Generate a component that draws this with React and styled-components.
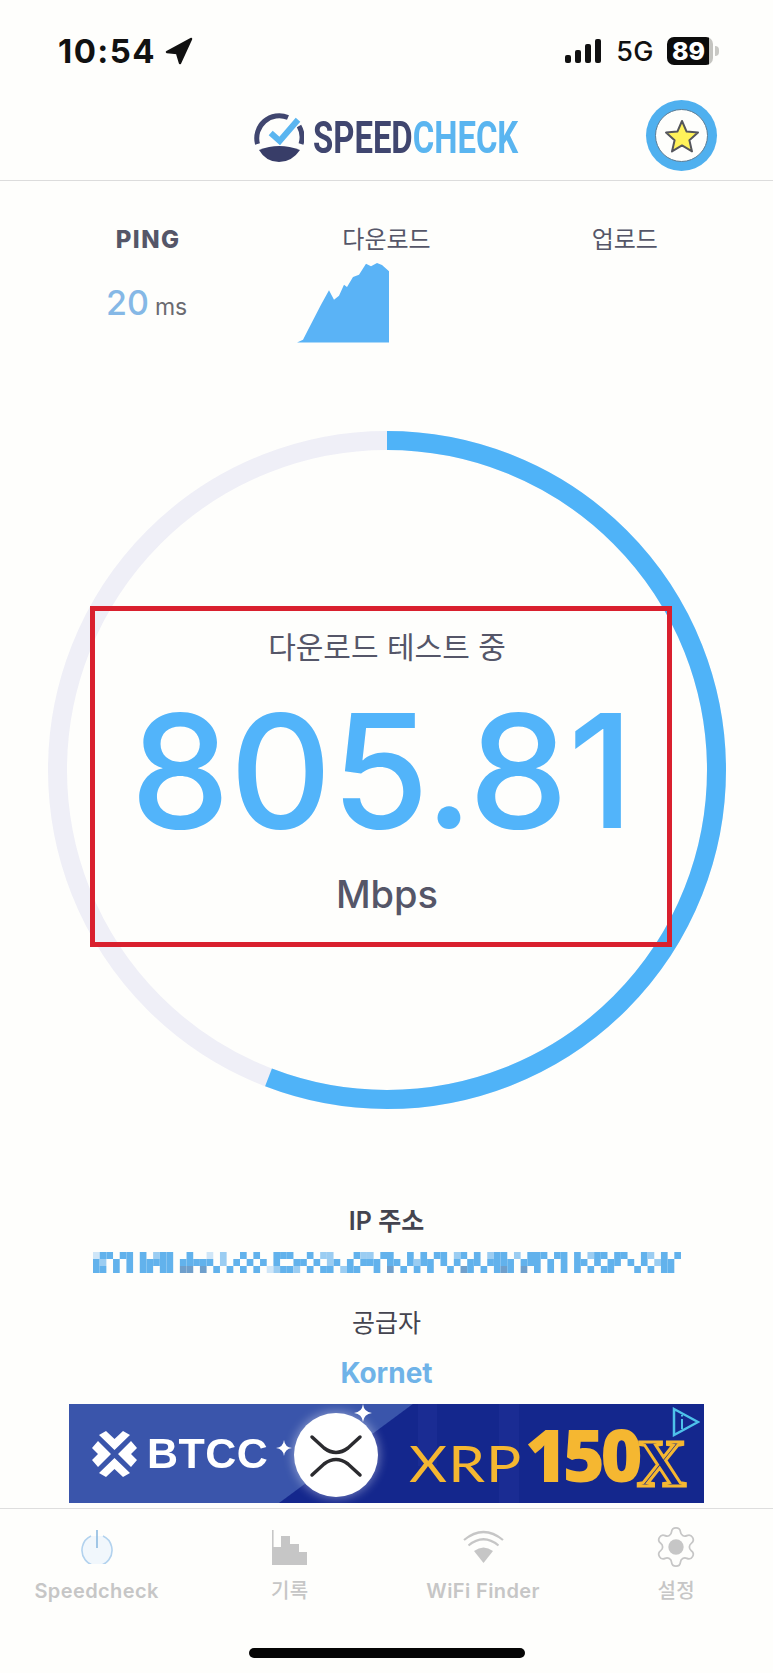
import React from "react";
import styled, { createGlobalStyle } from "styled-components";
import { Settings } from "lucide-react";

const KR = `Inter, "Noto Sans CJK KR", sans-serif`;

const GlobalStyle = createGlobalStyle`
  html, body {
    margin: 0;
    padding: 0;
    background: #fefefc;
  }
  * {
    box-sizing: border-box;
  }
`;

const Page = styled.div`
  width: 773px;
  height: 1673px;
  overflow: hidden;
  background: #fefefc;
  font-family: ${KR};
  display: flex;
  flex-direction: column;
`;

/* status bar */
const StatusBar = styled.div`
  height: 90px;
  padding: 35px 60px 0 58px;
  display: flex;
  justify-content: space-between;
  align-items: flex-start;
`;

const StatusGroup = styled.div`
  display: flex;
  align-items: center;
  height: 32px;
  color: #111;
`;

const Clock = styled.span`
  font-size: 33px;
  font-weight: 700;
  letter-spacing: 1.4px;
  margin-right: 9px;
`;

const Bars = styled.div`
  display: flex;
  align-items: flex-end;
  gap: 4px;
  height: 24px;
  margin-right: 15px;
`;

const Bar = styled.i`
  display: block;
  width: 6px;
  height: ${(p) => p.$h}px;
  background: #111;
  border-radius: 2px;
`;

const Network = styled.span`
  font-size: 27px;
  font-weight: 500;
  letter-spacing: 0.5px;
  margin-right: 13px;
`;

const Battery = styled.div`
  width: 46px;
  height: 28px;
  border-radius: 7px;
  background: linear-gradient(90deg, #0c0c0c 92%, #c4c4c0 92%);
  color: #fff;
  font-size: 25px;
  font-weight: 800;
  display: flex;
  align-items: center;
  justify-content: center;
  padding-right: 3px;
  position: relative;
  &::after {
    content: "";
    position: absolute;
    right: -6px;
    top: 9px;
    width: 4px;
    height: 10px;
    border-radius: 0 4px 4px 0;
    background: #c9c9c5;
  }
`;

/* header */
const Header = styled.header`
  height: 91px;
  border-bottom: 1.5px solid #dcdcdc;
  display: grid;
  grid-template-columns: 1fr auto 1fr;
  align-items: center;
  padding: 0 56px;
`;

const Logo = styled.div`
  grid-column: 2;
  display: flex;
  align-items: center;
  gap: 9px;
  margin-top: 5px;
`;

const Wordmark = styled.div`
  width: 206px;
  height: 40px;
  font-family: Roboto, sans-serif;
  font-size: 45px;
  line-height: 40px;
  font-weight: 700;
  white-space: nowrap;
  color: #40466f;
  transform: scaleX(0.73);
  transform-origin: left center;
`;

const WordAccent = styled.span`
  color: #5ab5f0;
`;

const FavButton = styled.div`
  grid-column: 3;
  justify-self: end;
  width: 71px;
  height: 71px;
  margin-top: 1px;
  border-radius: 50%;
  background: #4fb0ef;
  display: flex;
  align-items: center;
  justify-content: center;
`;

const FavInner = styled.div`
  width: 53px;
  height: 53px;
  border-radius: 50%;
  background: #fefefc;
  border: 1.5px solid #5c7c94;
  display: flex;
  align-items: center;
  justify-content: center;
`;

/* ping / download / upload */
const Stats = styled.section`
  height: 250px;
  padding: 44px 29px 0;
  display: grid;
  grid-template-columns: repeat(3, 1fr);
  align-content: start;
`;

const StatColumn = styled.div`
  display: flex;
  flex-direction: column;
  align-items: center;
`;

const StatTitle = styled.div`
  height: 30px;
  line-height: 30px;
  font-size: 24px;
  font-weight: ${(p) => (p.$latin ? 800 : 400)};
  letter-spacing: ${(p) => (p.$latin ? 1.5 : 0)}px;
  color: #555668;
`;

const PingValue = styled.div`
  margin-top: 28px;
  height: 40px;
  line-height: 40px;
  margin-right: 3px;
  font-size: 34px;
  font-weight: 500;
  color: #85b8e6;
`;

const PingUnit = styled.span`
  font-size: 23px;
  font-weight: 400;
  color: #6a6a70;
  margin-left: 6px;
`;

const Sparkline = styled.svg`
  display: block;
  margin-top: 8px;
  margin-right: 87px;
`;

/* gauge */
const Gauge = styled.section`
  width: 678px;
  height: 678px;
  margin-left: 48px;
  display: grid;
`;

const GaugeRing = styled.svg`
  grid-area: 1 / 1;
  display: block;
`;

const Readout = styled.div`
  grid-area: 1 / 1;
  width: 582px;
  height: 341px;
  margin: 175px 0 0 42px;
  padding-left: 12px;
  border: 5px solid #d9202e;
  display: flex;
  flex-direction: column;
  align-items: center;
  z-index: 1;
`;

const ReadoutTitle = styled.div`
  margin-top: 18px;
  height: 36px;
  line-height: 36px;
  font-size: 30px;
  color: #555668;
`;

const Speed = styled.div`
  margin: 31px 0 0 -10px;
  height: 150px;
  line-height: 150px;
  font-size: 158px;
  font-weight: 500;
  letter-spacing: -0.2px;
  color: #52b4fa;
`;

const SpeedUnit = styled.div`
  margin-top: 26px;
  height: 44px;
  line-height: 44px;
  font-size: 38px;
  font-weight: 500;
  color: #555668;
`;

/* ip + provider */
const Info = styled.section`
  padding-top: 97px;
  display: flex;
  flex-direction: column;
  align-items: center;
`;

const InfoLabel = styled.div`
  height: 30px;
  line-height: 30px;
  margin-top: ${(p) => p.$top || 0}px;
  font-size: 25px;
  font-weight: ${(p) => p.$weight || 400};
  color: #44444f;
`;

const Mosaic = styled.svg`
  display: block;
  margin-top: 16px;
  filter: blur(0.4px);
`;

const Provider = styled.div`
  height: 30px;
  line-height: 30px;
  margin-top: 20px;
  font-size: 28px;
  font-weight: 700;
  color: #6fb3e8;
`;

/* ad */
const Ad = styled.div`
  position: relative;
  width: 635px;
  height: 99px;
  margin: 16px 0 0 69px;
  padding-left: 23px;
  display: flex;
  align-items: center;
  filter: blur(0.5px);
  background:
    linear-gradient(#1a2c93, #1a2c93) 349px 0 / 19px 62px no-repeat,
    linear-gradient(#1a2c93, #1a2c93) 430px 0 / 20px 99px no-repeat,
    linear-gradient(143.5deg, #3a55ab 204px, #14278d 205px);
`;

const BtccText = styled.span`
  margin-left: 10px;
  font-family: "Liberation Sans", sans-serif;
  font-size: 43px;
  font-weight: 700;
  color: #fff;
  letter-spacing: 0.5px;
`;

const Coin = styled.div`
  position: absolute;
  left: 225px;
  top: 9px;
  width: 84px;
  height: 84px;
  border-radius: 50%;
  background: #fff;
  box-shadow: 0 0 10px 2px rgba(255, 255, 255, 0.35);
`;

const Spark = styled.svg`
  position: absolute;
  left: ${(p) => p.$x}px;
  top: ${(p) => p.$y}px;
`;

const XrpText = styled.span`
  position: absolute;
  left: 340px;
  top: 29px;
  font-family: Lato, sans-serif;
  font-size: 51px;
  line-height: 60px;
  font-weight: 400;
  letter-spacing: 1px;
  color: #f5b731;
  transform: scaleX(1.15);
  transform-origin: left;
`;

const Multiplier = styled.span`
  position: absolute;
  left: 456px;
  top: 14px;
  font-family: "Open Sans", sans-serif;
  font-size: 72px;
  line-height: 72px;
  font-weight: 800;
  letter-spacing: -4.5px;
  color: #f5b731;
`;

const MultiplierX = styled.span`
  position: absolute;
  left: 568px;
  top: 29px;
  font-family: "Liberation Serif", serif;
  font-size: 68px;
  line-height: 60px;
  font-weight: 700;
  color: #14278d;
  -webkit-text-stroke: 3px #f5b731;
`;

const AdChoices = styled.svg`
  position: absolute;
  right: 4px;
  top: 3px;
`;

/* bottom nav */
const Nav = styled.nav`
  margin-top: 5px;
  border-top: 1.5px solid #dedede;
  padding-top: 18px;
  display: grid;
  grid-template-columns: repeat(4, 1fr);
`;

const NavItem = styled.div`
  display: flex;
  flex-direction: column;
  align-items: center;
`;

const NavIcon = styled.div`
  height: 40px;
  display: flex;
  align-items: center;
  justify-content: center;
  color: #c6c6c6;
  circle {
    r: 4px;
    fill: #c6c6c6;
    stroke: none;
  }
`;

const NavLabel = styled.div`
  margin-top: 11px;
  height: 26px;
  line-height: 26px;
  font-size: 20px;
  font-weight: ${(p) => (p.$kr ? 500 : 600)};
  letter-spacing: 0.4px;
  color: #c6c6c6;
`;

const HomeBar = styled.div`
  width: 276px;
  height: 10px;
  margin: 44px auto 0;
  border-radius: 5px;
  background: #050505;
`;

const CHART =
  "M0 79.5 L6 76.7 L12 65 L24 41.7 L32 27.3 L37 36.7 L42 32.7 L47 21.7 L50 24 L56 14 L62 11.7 L69 .7 L74 3.3 L80 0 L85 2 L92 8.3 L92 79.5Z";

// blurred-out address, one string per row of blocks
const MOSAIC = [
  "133.33.3.233..3..1.2..3.3..333..3.22...322.33..3.3.33.23.3.233.2.333.33.3.233.33..32.3.3",
  "32.3.3.33333.33333.2.3.3.3.3..33.3.23.3.333.33.3233.3.3.33.3333.333.3.3.33.3.33.3.3.233",
  "33.3.3.33.33.44.4.3.3.3.3.12332.3.33.233..3.4.3.3.3..3.43.3.343.4.3.3.3.3.3.33...3.3.33",
];
const MOSAIC_COLORS = { 1: "#cfe6f8", 2: "#9bcdf2", 3: "#62b2ec", 4: "#6f9fcb" };

function MosaicBlocks() {
  const size = 588 / MOSAIC[0].length;
  return (
    <Mosaic width="588" height="21" viewBox="0 0 588 21">
      {MOSAIC.map((row, y) =>
        row.split("").map((c, x) =>
          c === "." ? null : (
            <rect key={`${x}-${y}`} x={x * size} y={y * 7} width={size} height="7" fill={MOSAIC_COLORS[c]} />
          )
        )
      )}
    </Mosaic>
  );
}

function GaugeSvg() {
  const r = 329.5;
  const c = 2 * Math.PI * r;
  const progress = 201 / 360;
  return (
    <GaugeRing width="678" height="678" viewBox="0 0 678 678">
      <circle cx="339" cy="339" r={r} fill="none" stroke="#efeff7" strokeWidth="19" />
      <circle
        cx="339"
        cy="339"
        r={r}
        fill="none"
        stroke="#4fb3f8"
        strokeWidth="19"
        strokeDasharray={`${c * progress} ${c}`}
        transform="rotate(-90 339 339)"
      />
    </GaugeRing>
  );
}

function SparkIcon({ x, y, size }) {
  return (
    <Spark $x={x} $y={y} width={size} height={size} viewBox="0 0 20 20">
      <path d="M10 0 Q11 9 20 10 Q11 11 10 20 Q9 11 0 10 Q9 9 10 0Z" fill="#fff" />
    </Spark>
  );
}

export default function App() {
  return (
    <Page>
      <GlobalStyle />
      <StatusBar>
        <StatusGroup>
          <Clock>10:54</Clock>
          <svg width="28" height="28" viewBox="0 0 28 28">
            <path d="M26 2 L2 15 L12 16 L15 26 Z" fill="#111" stroke="#111" strokeWidth="2.5" strokeLinejoin="round" />
          </svg>
        </StatusGroup>
        <StatusGroup>
          <Bars>
            <Bar $h={8} />
            <Bar $h={13} />
            <Bar $h={19} />
            <Bar $h={24} />
          </Bars>
          <Network>5G</Network>
          <Battery>89</Battery>
        </StatusGroup>
      </StatusBar>

      <Header>
        <Logo>
          <svg width="50" height="50" viewBox="0 0 50 50">
            <path d="M3.5 31 A22.5 22.5 0 0 1 34 4.5" fill="none" stroke="#40466f" strokeWidth="5" />
            <path d="M45 13 A22.5 22.5 0 0 1 47 31" fill="none" stroke="#40466f" strokeWidth="5" />
            <path d="M5 37 Q25 29 46 37 Q38 49 25 49 Q12 49 5 37Z" fill="#383d68" />
            <path d="M16.7 20 L25.7 28 L44 6.7" fill="none" stroke="#5ab5f0" strokeWidth="6" />
          </svg>
          <Wordmark>
            SPEED<WordAccent>CHECK</WordAccent>
          </Wordmark>
        </Logo>
        <FavButton>
          <FavInner>
            <svg width="36" height="34" viewBox="0 0 36 34">
              <path
                d="M18 2 L22.6 12.6 L34 13.6 L25.4 21.2 L28 32.4 L18 26.4 L8 32.4 L10.6 21.2 L2 13.6 L13.4 12.6 Z"
                fill="#fff25a"
                stroke="#55565c"
                strokeWidth="2"
                strokeLinejoin="round"
              />
            </svg>
          </FavInner>
        </FavButton>
      </Header>

      <Stats>
        <StatColumn>
          <StatTitle $latin>PING</StatTitle>
          <PingValue>
            20<PingUnit>ms</PingUnit>
          </PingValue>
        </StatColumn>
        <StatColumn>
          <StatTitle>다운로드</StatTitle>
          <Sparkline width="92" height="80" viewBox="0 0 92 80">
            <path d={CHART} fill="#5ab3f6" />
          </Sparkline>
        </StatColumn>
        <StatColumn>
          <StatTitle>업로드</StatTitle>
        </StatColumn>
      </Stats>

      <Gauge>
        <GaugeSvg />
        <Readout>
          <ReadoutTitle>다운로드 테스트 중</ReadoutTitle>
          <Speed>805.81</Speed>
          <SpeedUnit>Mbps</SpeedUnit>
        </Readout>
      </Gauge>

      <Info>
        <InfoLabel $weight={600}>IP 주소</InfoLabel>
        <MosaicBlocks />
        <InfoLabel $top={35}>공급자</InfoLabel>
        <Provider>Kornet</Provider>
      </Info>

      <Ad>
        <svg width="45" height="46" viewBox="0 0 45 46">
          <g fill="#fff">
            <polygon points="7,4 14,0 22.5,8 31,0 38,4 22.5,19" />
            <polygon points="7,42 14,46 22.5,38 31,46 38,42 22.5,27" />
            <polygon points="0,17 6,10 19,23 6,36 0,29 6,23" />
            <polygon points="45,17 39,10 26,23 39,36 45,29 39,23" />
          </g>
        </svg>
        <BtccText>BTCC</BtccText>
        <SparkIcon x={207} y={36} size={16} />
        <Coin>
          <svg width="84" height="84" viewBox="0 0 84 84">
            <path
              d="M18 24 L30 35 Q42 44 54 35 L66 24 M18 62 L30 51 Q42 42 54 51 L66 62"
              fill="none"
              stroke="#2b2b2f"
              strokeWidth="3.5"
              strokeLinecap="round"
            />
          </svg>
        </Coin>
        <SparkIcon x={285} y={0} size={18} />
        <XrpText>XRP</XrpText>
        <Multiplier>150</Multiplier>
        <MultiplierX>X</MultiplierX>
        <AdChoices width="28" height="30" viewBox="0 0 28 30">
          <path d="M2 2 L26 15 L2 28 Z" fill="none" stroke="#4ec1ea" strokeWidth="2.5" />
          <path d="M10 12 V22 M10 8 V9.5" stroke="#4ec1ea" strokeWidth="2" />
        </AdChoices>
      </Ad>

      <Nav>
        <NavItem>
          <NavIcon>
            <svg width="32" height="34" viewBox="0 0 32 34">
              <path d="M10 6 A15 15.5 0 1 0 22 6" fill="#f1f7fc" stroke="#b2d2ee" strokeWidth="1.6" />
              <path d="M16 0 V18" stroke="#8dbae0" strokeWidth="1.6" />
            </svg>
          </NavIcon>
          <NavLabel>Speedcheck</NavLabel>
        </NavItem>
        <NavItem>
          <NavIcon>
            <svg width="35" height="35" viewBox="0 0 35 35">
              <path d="M0 0 H1.6 V17 H9 V6 H18 V14 H27 V22 H35 V35 H0 Z" fill="#c6c6c6" />
            </svg>
          </NavIcon>
          <NavLabel $kr>기록</NavLabel>
        </NavItem>
        <NavItem>
          <NavIcon>
            <svg width="41" height="34" viewBox="0 0 41 34">
              <path d="M1 10 Q20.5 -6 40 10 M5.5 15.5 Q20.5 3 35.5 15.5" fill="none" stroke="#c6c6c6" strokeWidth="2.2" />
              <path d="M11 21 Q20.5 14 30 21 L20.5 33 Z" fill="#c6c6c6" />
            </svg>
          </NavIcon>
          <NavLabel>WiFi Finder</NavLabel>
        </NavItem>
        <NavItem>
          <NavIcon>
            <Settings size={46} strokeWidth={0.9} color="#c6c6c6" />
          </NavIcon>
          <NavLabel $kr>설정</NavLabel>
        </NavItem>
      </Nav>
      <HomeBar />
    </Page>
  );
}
